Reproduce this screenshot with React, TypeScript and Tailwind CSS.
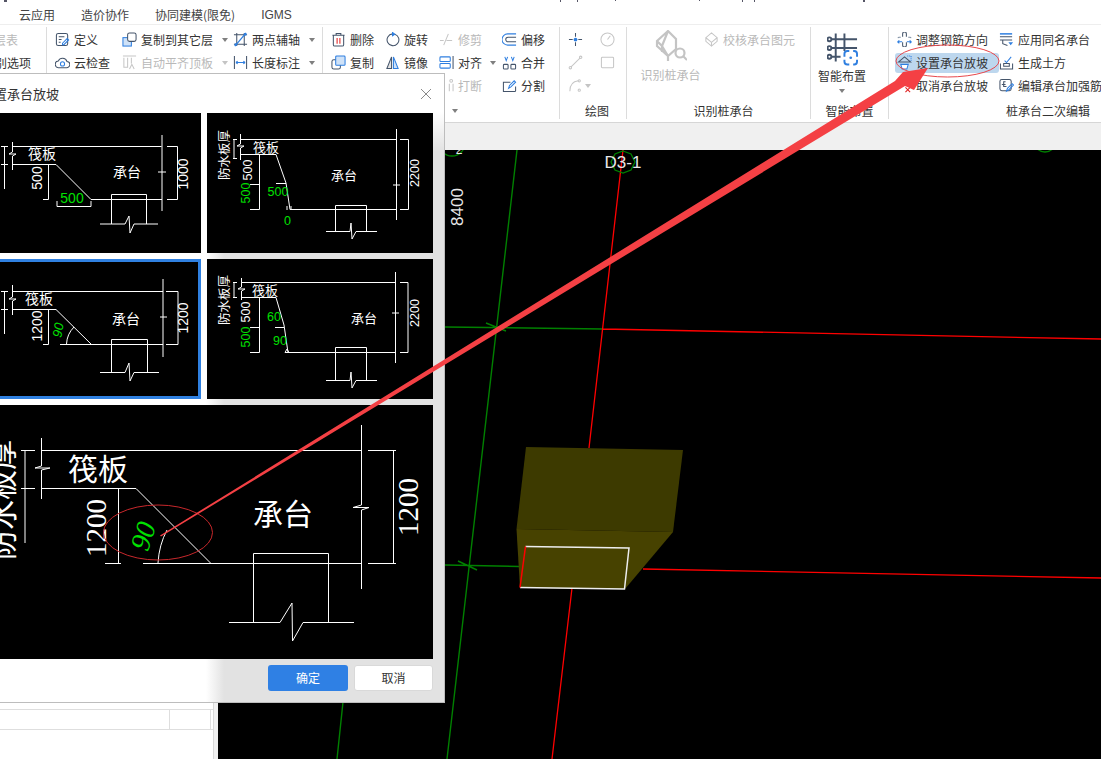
import type { ReactNode } from "react";

const DARK = "#44546a";
const BLUE = "#2f7fe0";
const GREY = "#c6c6c6";
const SANS = "Noto Sans CJK SC, sans-serif";
const SERIF = "Liberation Serif, Noto Sans CJK SC, serif";

function Ico({ children, w = 15 }: { children: ReactNode; w?: number }) {
  return (
    <svg viewBox="0 0 16 16" width={w} height={w} fill="none" strokeWidth="1.1" stroke={DARK} className="shrink-0">
      {children}
    </svg>
  );
}

function Caret({ light }: { light?: boolean }) {
  return <span className={`block h-0 w-0 border-x-[3.5px] border-t-[4px] border-x-transparent ${light ? "border-t-[#c4c4c4]" : "border-t-[#7f7f7f]"}`} />;
}

function Item({
  icon,
  label,
  off,
  caret,
  w,
  active,
}: {
  icon: ReactNode;
  label: string;
  off?: boolean;
  caret?: number;
  w: string;
  active?: boolean;
}) {
  return (
    <div className={`flex h-[23px] items-center ${w}`}>
      <div className={`flex h-[20px] items-center gap-[4px] whitespace-nowrap rounded-[3px] ${active ? "-ml-[2px] w-[105px] bg-[#bdd7ee] pl-[2px]" : ""}`}>
        {icon}
        <span className={off ? "text-[#b9b9b9]" : "text-[#333]"}>{label}</span>
        {caret !== undefined && (
          <span className="flex items-center" style={{ marginLeft: caret }}>
            <Caret light={off} />
          </span>
        )}
      </div>
    </div>
  );
}

function Group({ w, pl, label, children }: { w: string; pl: string; label?: string; children: ReactNode }) {
  return (
    <div className={`mt-[2px] flex h-[92px] shrink-0 flex-col border-r border-[#dcdcdc] ${w} ${pl}`}>
      <div className="flex min-h-0 flex-1 flex-col pt-[1px]">{children}</div>
      {label && <div className="h-[16px] text-center leading-[16px] text-[#333]">{label}</div>}
    </div>
  );
}

const I = {
  define: (
    <Ico>
      <rect x="1.5" y="1.5" width="12" height="13" rx="2" />
      <path d="M4 5h6M4 8h3M4 11h2" />
      <path d="M8 12l5-5 1.5 1.5-5 5H8z" stroke={BLUE} />
    </Ico>
  ),
  copyLayer: (
    <Ico>
      <rect x="1" y="6" width="9" height="9" fill="#cfe2f8" stroke={BLUE} />
      <rect x="6" y="1" width="9" height="9" rx="2" fill="#fff" />
    </Ico>
  ),
  axis: (
    <Ico>
      <path d="M4 1v14M12 1v14M1 13h14M1 3h14" />
      <path d="M2 15L14 1" stroke={BLUE} strokeWidth="1.4" />
      <circle cx="13" cy="2.5" r="1.4" fill={BLUE} stroke="none" />
      <circle cx="3" cy="13.5" r="1.4" fill={BLUE} stroke="none" />
    </Ico>
  ),
  cloud: (
    <Ico>
      <path d="M4 13.5a3.5 3.5 0 01-.5-7 5 5 0 019.3.4 3.3 3.3 0 01-.6 6.6z" />
      <circle cx="8" cy="9.5" r="2.2" stroke={BLUE} />
    </Ico>
  ),
  align: (
    <Ico>
      <path d="M1 1h14M2 3v10h4V3M10 3v6" stroke={GREY} />
      <path d="M8 15l2.5-5 2.5 5" stroke={GREY} />
    </Ico>
  ),
  dim: (
    <Ico>
      <path d="M1.5 1v14M14.5 1v14" />
      <path d="M3 8h10M3 8l2-1.5M3 8l2 1.5M13 8l-2-1.5M13 8l-2 1.5" stroke={BLUE} />
    </Ico>
  ),
  del: (
    <Ico>
      <path d="M1.5 3.5h13M5.5 3.5V1.5h5v2M2.5 3.5v10a1.5 1.5 0 001.5 1.5h8a1.5 1.5 0 001.5-1.5v-10" />
      <path d="M6.5 6.5v6M9.5 6.5v6" stroke="#e02020" />
    </Ico>
  ),
  rotate: (
    <Ico>
      <path d="M10.5 2.3A6.3 6.3 0 118 2" />
      <path d="M8 .5v3.5L10.5 2.3z" fill={BLUE} stroke={BLUE} />
    </Ico>
  ),
  trim: (
    <Ico>
      <path d="M1 9h4M8 9h6M10 2L5 14" stroke={GREY} />
    </Ico>
  ),
  offset: (
    <Ico>
      <path d="M15 2H6a6 6 0 000 12h9" stroke={BLUE} />
      <path d="M15 5.5H6.5a2.5 2.5 0 000 5H15" />
    </Ico>
  ),
  copy: (
    <Ico>
      <rect x="1" y="5" width="9" height="10" rx="2" />
      <rect x="5" y="1" width="10" height="10" rx="1" fill="#cfe2f8" stroke={BLUE} />
    </Ico>
  ),
  mirror: (
    <Ico>
      <path d="M7 2L2 14.5h5z" fill="#e4e4e4" />
      <path d="M9 2l5 12.5H9z" fill="#cfe2f8" stroke={BLUE} />
    </Ico>
  ),
  alignV: (
    <Ico>
      <path d="M15 1v14" />
      <rect x="1" y="2" width="11" height="5" rx="1" stroke={BLUE} />
      <rect x="1" y="9" width="11" height="5" rx="1" stroke={BLUE} />
    </Ico>
  ),
  merge: (
    <Ico>
      <rect x="1.5" y="10" width="5" height="5" rx="1" />
      <rect x="9.5" y="10" width="5" height="5" rx="1" />
      <path d="M3 2l1.5 4L6 2M10 2l1.5 4L13 2" stroke={BLUE} />
    </Ico>
  ),
  split: (
    <Ico>
      <path d="M14.5 9v4.5a1 1 0 01-1 1h-12v-10H9" />
      <path d="M7 11l1-3 5-5 1.5 1.5-5 5z" stroke={BLUE} />
    </Ico>
  ),
  breakIco: (
    <Ico>
      <path d="M11 6v8M15 6v8" stroke={GREY} />
      <circle cx="13" cy="3" r="1.5" stroke={GREY} />
    </Ico>
  ),
  rebar: (
    <Ico>
      <path d="M6 5V2a2 2 0 014 0v3M6 11v3a2 2 0 004 0v-3" />
      <path d="M4 5.5H2a1.5 1.5 0 00-1 1M12 5.5h2a1.5 1.5 0 011 1" stroke="#7f8fa3" />
      <path d="M.5 10.5h5M10.5 10.5h5M.5 10.5l2-1.5M.5 10.5l2 1.5M15.5 10.5l-2-1.5M15.5 10.5l-2 1.5" stroke={BLUE} />
    </Ico>
  ),
  sameName: (
    <Ico>
      <path d="M1 2h13" stroke={BLUE} strokeWidth="1.6" />
      <path d="M1 5h13M1 8.5h13M4 8.5v4l5 2" />
      <path d="M10 11h5l-2.5 3z" fill={BLUE} stroke="none" />
    </Ico>
  ),
  setSlope: (
    <Ico>
      <path d="M1.5 7.5L8 2l6.5 5.5z" stroke={DARK} />
      <path d="M4 10l1.5 5h5L12 10z" fill="#fff" stroke={BLUE} />
      <path d="M11 1h4v5" stroke={BLUE} strokeDasharray="1 1" />
    </Ico>
  ),
  earth: (
    <Ico>
      <path d="M1.5 9v6h13V9" />
      <path d="M5 9h6v3H5z" />
      <path d="M6 6l2 2 5-6" stroke={BLUE} />
    </Ico>
  ),
  cancelSlope: (
    <Ico>
      <path d="M1 1v7h8M1 4h5" />
      <path d="M9 10l5 5M14 10l-5 5" stroke="#e02020" />
    </Ico>
  ),
  editRebar: (
    <Ico>
      <rect x="1" y="1.5" width="12" height="12" rx="2" />
      <path d="M7 4H5v5h3M3 7h4" />
      <path d="M8 14l1-3 5-5 1.5 1.5-5 5z" stroke={BLUE} />
    </Ico>
  ),
  checkPile: (
    <Ico>
      <path d="M8 1l6 5-6 5-6-5z M2 6v4l6 5 6-5V6" stroke={GREY} />
      <path d="M8 11v4" stroke={GREY} />
    </Ico>
  ),
};

function T({
  x,
  y,
  t,
  size = 13,
  fill = "#fff",
  rot,
  font = SANS,
  italic,
}: {
  x: number;
  y: number;
  t: string;
  size?: number;
  fill?: string;
  rot?: number;
  font?: string;
  italic?: boolean;
}) {
  return (
    <text
      x={x}
      y={y}
      fontSize={size}
      fill={fill}
      fontFamily={font}
      fontStyle={italic ? "italic" : undefined}
      textAnchor="middle"
      dominantBaseline="central"
      transform={rot !== undefined ? `rotate(${rot} ${x} ${y})` : undefined}
    >
      {t}
    </text>
  );
}

const NUM = "Liberation Sans, sans-serif";
const LIME = "#00e000";

function Card({ box, selected, children }: { box: string; selected?: boolean; children: ReactNode }) {
  return (
    <div className={`h-[140px] overflow-hidden bg-black ${selected ? "border-[3px] border-[#2f80e0]" : ""}`}>
      <svg viewBox={box} className={`block h-[140px] w-[226px] ${selected ? "-m-[3px]" : ""}`}>
        {children}
      </svg>
    </div>
  );
}

function Dialog() {
  return (
    <div className="absolute left-[-100px] top-[73px] flex h-[630px] w-[545px] flex-col border border-[#bdbdbd] bg-white">
      <div className="absolute bottom-0 left-[305px] right-0 top-[38px] bg-[linear-gradient(to_bottom,#fff,transparent_40px),linear-gradient(to_right,#fff,#e2e2e2_18px)]" />
      <div className="relative flex h-[39px] shrink-0 items-center pl-[80px] pr-[12px] text-[13px] text-[#333]">
        <span>设置承台放坡</span>
        <svg viewBox="0 0 12 12" className="ml-auto h-[12px] w-[12px]" stroke="#8a8a8a" strokeWidth="1">
          <path d="M1 1l10 10M11 1L1 11" />
        </svg>
      </div>
      <div className="relative flex flex-col gap-[6px] pl-[74px] pr-[11px]">
        <div className="grid grid-cols-[226px_226px] gap-[6px]">
          <Card box="-25 113 226 140">
            <path
              stroke="#fff"
              fill="none"
              d="M13 146.5H161.5M162 135V211M158 172H166M167 146.5H177.5V199.5H167M4.5 146V189M1 146.5H8M1 164.5H8M12.5 142V152L9 154H16L12.5 156V170M13 164.5H56L91 199.5H162M48.5 164.5V199.5M43 164.5H48.5M43 199.5H48.5M111.5 224V194.5H146.5V224M100 224H125L129 216L130 233L134 224H158M57 201V206.5H91V201"
            />
            <T x={42} y={153} t="筏板" size={14} />
            <T x={127} y={171} t="承台" size={14} />
            <T x={183} y={174} t="1000" rot={-90} font={NUM} size={14} />
            <T x={37} y={178} t="500" rot={-90} font={NUM} size={14} />
            <T x={72} y={198} t="500" fill={LIME} font={NUM} size={14} />
          </Card>
          <Card box="207 113 226 140">
            <path
              stroke="#fff"
              fill="none"
              d="M240 139.5H396.5M396.5 129V220M393 185H400M400 139.5H408.5V209.5H400M234 139V158M233 139.5H237M233 158.5H237M240.5 134V144L237 146H244L240.5 148V160M240 154.5H276L286 183L290 209.5H396.5M259.5 154.5V209.5M250 154.5H259.5M250 184.5H259.5M250 209.5H259.5M276 183.5H286M335.5 231V205.5H366.5V231M326 231.5H350L351 223L352 239L356 231.5H377M287 206V210M291 206V210"
            />
            <T x={223} y={155} t="防水板厚" rot={-90} size={12.5} />
            <T x={266} y={146} t="筏板" size={13} />
            <T x={344} y={174} t="承台" size={13} />
            <T x={415} y={173} t="2200" rot={-90} font={NUM} size={12.5} />
            <T x={248} y={170} t="500" rot={-90} font={NUM} size={12.5} />
            <T x={246} y={193} t="500" rot={-90} font={NUM} size={12.5} fill={LIME} />
            <T x={278} y={192} t="500" font={NUM} size={12.5} fill={LIME} />
            <T x={287.5} y={221} t="0" font={NUM} size={12.5} fill={LIME} />
          </Card>
          <Card box="-25 259 226 140" selected>
            <path
              stroke="#fff"
              fill="none"
              d="M13 291.5H163M163 279V357M160 317H167M166 291.5H178V344.5H166M4.5 291V334M1 291.5H8M1 309.5H8M12.5 285V297L9 299H16L12.5 301V315M13 309.5H56L91 344M48.5 309.5V344.5M43 309.5H48.5M43 344.5H48.5M60 344.5H163M66.5 344Q67 334 74 327M111.5 372V339.5H147.5V372M100 372.5H125L129 363L130 381L134 372.5H159"
            />
            <T x={39} y={298} t="筏板" size={14} />
            <T x={126} y={318} t="承台" size={14} />
            <T x={183} y={318} t="1200" rot={-90} font={NUM} size={14} />
            <T x={37} y={326} t="1200" rot={-90} font={NUM} size={14} />
            <T x={58} y={330} t="90" rot={-80} font={NUM} size={13} fill={LIME} italic />
          </Card>
          <Card box="207 259 226 140">
            <path
              stroke="#fff"
              fill="none"
              d="M241 282.5H395.5M395.5 272V363M392 313H399M400 282.5H408V352.5H400M234 282V297M233 282.5H237M233 297.5H237M241.5 278V287L238 289H245L241.5 291V300M241 297.5H276L284 325L288 352.5M259.5 297.5V352.5M250 327.5H259.5M250 352.5H259.5M275 327.5H284M285 352.5H395.5M285 352.5L287 349L289 352.5M335.5 380V347.5H366.5V380M326 380.5H350L351 372L352 388L356 380.5H377"
            />
            <T x={223} y={300} t="防水板厚" rot={-90} size={12.5} />
            <T x={265} y={289} t="筏板" size={13} />
            <T x={364} y={317} t="承台" size={13} />
            <T x={415} y={313} t="2200" rot={-90} font={NUM} size={12.5} />
            <T x={246} y={312} t="500" rot={-90} font={NUM} size={12.5} />
            <T x={246} y={337} t="500" rot={-90} font={NUM} size={12.5} fill={LIME} />
            <T x={274} y={317} t="60" font={NUM} size={12.5} fill={LIME} />
            <T x={280} y={341} t="90" font={NUM} size={12.5} fill={LIME} />
          </Card>
        </div>
        <div className="h-[254px] bg-black">
          <svg viewBox="-25 405 458 254" className="block h-[254px] w-[458px]">
            <path
              stroke="#fff"
              fill="none"
              d="M41 450.5H361M361.5 425V505L353 507.5H369L361.5 510V589M368 450.5H396M393.5 450.5V563.5M368 563.5H396M25 450V543M21 450.5H35M21 488.5H35M41.5 438V466L35 468H50L41.5 470V499M41 488.5H136L211 563.5M118.5 488.5V563.5M118 488.5H125M105 563.5H121M143 563.5H361M158 563Q159 545 167 530M253.5 622V553.5H328.5V622M229 622.5H280L292 603L292.5 641L303 622.5H354"
            />
            <T x={98} y={467} t="筏板" size={30} />
            <T x={283} y={512} t="承台" size={30} />
            <T x={408} y={507} t="1200" rot={-90} font={SERIF} size={29} />
            <T x={96} y={528} t="1200" rot={-90} font={SERIF} size={29} />
            <T x={143} y={536} t="90" rot={-72} font={SERIF} size={28} fill={LIME} italic />
            <T x={0} y={500} t="防水板厚" rot={-90} size={30} />
          </svg>
        </div>
      </div>
      <div className="relative mt-[6px] flex h-[26px] justify-end gap-[6px] pr-[11px] text-[12px]">
        <button className="h-[26px] w-[80px] rounded-[3px] bg-[#2f80e4] text-white">确定</button>
        <button className="h-[26px] w-[79px] rounded-[3px] border border-[#d9d9d9] bg-white text-[#333]">取消</button>
      </div>
    </div>
  );
}

export default function App() {
  return (
    <div className="relative h-[759px] w-[1101px] overflow-hidden bg-white font-['Noto_Sans_CJK_SC',sans-serif] text-[12px]">
      {/* title bar leftovers */}
      <svg className="block h-[3px] w-[1101px]" viewBox="0 0 1101 3">
        <path d="M4 0h3v2H4zM560 0h1v2h-1zM577 0h1v2h-1zM615 0h1v1h-1zM699 0h1v1h-1zM742 0h1v2h-1zM754 0h1v2h-1zM863 0h2v2h-2z" fill="#556" />
      </svg>
      <div className="flex h-[22px] items-center border-b border-[#eeeeee] pt-[3px] text-[#444]">
        <span className="ml-[19px]">云应用</span>
        <span className="ml-[26px]">造价协作</span>
        <span className="ml-[26px]">协同建模(限免)</span>
        <span className="ml-[26px] font-['Liberation_Sans',sans-serif]">IGMS</span>
      </div>
      <div className="flex h-[98px] border-b border-[#d6d6d6] bg-white">
        <Group w="w-[47px]" pl="pl-0">
          <div className="flex h-[23px] items-center justify-end whitespace-nowrap pr-[28px] text-[#b9b9b9]">层表</div>
          <div className="flex h-[23px] items-center justify-end whitespace-nowrap pr-[15px] text-[#333]">别选项</div>
        </Group>
        <Group w="w-[276px]" pl="pl-[8px]">
          <div className="flex">
            <Item w="w-[67px]" icon={I.define} label="定义" />
            <Item w="w-[111px]" icon={I.copyLayer} label="复制到其它层" caret={5} />
            <Item w="w-[88px]" icon={I.axis} label="两点辅轴" caret={5} />
          </div>
          <div className="flex">
            <Item w="w-[67px]" icon={I.cloud} label="云检查" />
            <Item w="w-[111px]" icon={I.align} label="自动平齐顶板" off caret={5} />
            <Item w="w-[88px]" icon={I.dim} label="长度标注" caret={5} />
          </div>
        </Group>
        <Group w="w-[237px]" pl="pl-[8px]">
          <div className="flex">
            <Item w="w-[54px]" icon={I.del} label="删除" />
            <Item w="w-[54px]" icon={I.rotate} label="旋转" />
            <Item w="w-[63px]" icon={I.trim} label="修剪" off />
            <Item w="w-[50px]" icon={I.offset} label="偏移" />
          </div>
          <div className="flex">
            <Item w="w-[54px]" icon={I.copy} label="复制" />
            <Item w="w-[54px]" icon={I.mirror} label="镜像" />
            <Item w="w-[63px]" icon={I.alignV} label="对齐" caret={4} />
            <Item w="w-[50px]" icon={I.merge} label="合并" />
          </div>
          <div className="flex pl-[108px]">
            <Item w="w-[63px]" icon={I.breakIco} label="打断" off />
            <Item w="w-[50px]" icon={I.split} label="分割" />
          </div>
          <div className="flex h-[18px] pl-[121px] pt-[12px]">
            <Caret />
          </div>
        </Group>
        <Group w="w-[67px]" pl="pl-[8px]" label="绘图">
          <div className="flex h-[23px] items-center gap-[17px]">
            <Ico>
              <path d="M8 1v4M8 11v4M1 8h4M11 8h4" />
              <circle cx="8" cy="8" r="2" fill={BLUE} stroke="none" />
            </Ico>
            <Ico>
              <circle cx="8" cy="8" r="7" stroke={GREY} />
              <path d="M8 8l3-4" stroke={GREY} />
            </Ico>
          </div>
          <div className="flex h-[23px] items-center gap-[17px]">
            <Ico>
              <path d="M3 13L13 3" stroke={GREY} />
              <circle cx="2.5" cy="13.5" r="1.3" stroke={GREY} />
              <circle cx="13.5" cy="2.5" r="1.3" stroke={GREY} />
            </Ico>
            <Ico>
              <rect x="1.5" y="2.5" width="13" height="11" rx="1" stroke={GREY} />
            </Ico>
          </div>
          <div className="flex h-[23px] items-center gap-[2px]">
            <Ico>
              <path d="M2 14Q2 4 11 3" stroke={GREY} />
              <circle cx="12" cy="3" r="1.2" stroke={GREY} />
              <circle cx="12" cy="13" r="1.2" stroke={GREY} />
            </Ico>
            <Caret light />
          </div>
        </Group>
        <Group w="w-[184px]" pl="pl-[10px]" label="识别桩承台">
          <div className="flex">
            <div className="flex w-[67px] flex-col items-center pt-[2px] text-[#b9b9b9]">
              <svg viewBox="0 0 32 32" width="32" height="32" fill="none" stroke="#c4c4c4" strokeWidth="2.2">
                <path d="M13 1L2 11v5l11 10 8-7V9zM2 11l5 5v6M13 1L7 16M7 16l6 10M13 26v5" />
                <circle cx="25" cy="23" r="4.5" />
                <path d="M28 26l4 4" />
              </svg>
              <span className="mt-[4px] whitespace-nowrap">识别桩承台</span>
            </div>
            <Item w="w-[92px]" icon={I.checkPile} label="校核承台图元" off />
          </div>
        </Group>
        <Group w="w-[78px]" pl="pl-0" label="智能布置">
          <div className="flex w-[62px] flex-col items-center pt-[5px]">
            <svg viewBox="0 0 32 33" width="31" height="33" fill="none" stroke={DARK} strokeWidth="2">
              <path d="M9 0v29M18 0v18M0 6h31M0 15h31M0 24h14" />
              <circle cx="2.5" cy="6" r="2" fill="#fff" />
              <circle cx="2.5" cy="15" r="2" fill="#fff" />
              <circle cx="2.5" cy="24" r="2" fill="#fff" />
              <path d="M18 24v-3a3 3 0 013-3h2M27 18h1a3 3 0 013 3v3M31 27v2a3 3 0 01-3 3h-1M23 32h-2a3 3 0 01-3-3v-2" stroke={BLUE} />
              <circle cx="24.5" cy="25" r="1.4" fill={BLUE} stroke="none" />
            </svg>
            <span className="mt-[1px] h-[18px] whitespace-nowrap text-[#333]">智能布置</span>
            <span className="mt-[4px] block h-[4px]">
              <Caret />
            </span>
          </div>
        </Group>
        <div className="mt-[2px] flex h-[92px] flex-col pl-[8px]">
          <div className="flex flex-1 flex-col pt-[1px]">
            <div className="flex">
              <Item w="w-[102px]" icon={I.rebar} label="调整钢筋方向" />
              <Item w="w-[100px]" icon={I.sameName} label="应用同名承台" />
            </div>
            <div className="flex">
              <Item w="w-[102px]" icon={I.setSlope} label="设置承台放坡" active />
              <Item w="w-[100px]" icon={I.earth} label="生成土方" />
            </div>
            <div className="flex">
              <Item w="w-[102px]" icon={I.cancelSlope} label="取消承台放坡" />
              <Item w="w-[100px]" icon={I.editRebar} label="编辑承台加强筋" />
            </div>
          </div>
          <div className="h-[16px] whitespace-nowrap pl-[109px] leading-[16px] text-[#333]">桩承台二次编辑</div>
        </div>
      </div>
      <div className="h-[27px] bg-[#f0f0f0]" />
      <div className="flex h-[609px] bg-[#f0f0f0]">
        <div className="flex w-[214px] shrink-0 flex-col justify-end border-r border-[#d8d8d8] bg-white pb-[29px]">
          <div className="grid h-[21px] grid-cols-[170px_41px] border-y border-[#dedede]">
            <div className="border-r border-[#dedede]" />
            <div className="border-r border-[#dedede]" />
          </div>
        </div>
        <div className="ml-[4px] flex-1 bg-black">
          <svg viewBox="218 150 883 609" className="block h-[609px] w-[883px]">
            <path d="M343 702L337 759M517 150L447 759M445 327L603 329M445 565L519 566.5M486 323L506 331M458 561L477 570" stroke="#008000" strokeWidth="1.4" fill="none" />
            <path d="M623 150L589 448M572 588L552 759M603 329L1101 339M643 569L1101 578" stroke="#ff0000" strokeWidth="1.3" fill="none" />
            <polygon points="526,447 683,450 673,532 516.5,529" fill="#3d3a00" />
            <polygon points="516.5,529 673,532 625,589 520,588" fill="#474200" />
            <path d="M525.5 546.5L629 548L624.5 589L520 587.5" stroke="#eee" strokeWidth="1.5" fill="none" />
            <path d="M525.5 546.5L520 587.5" stroke="#ff0000" strokeWidth="1.5" />
            <polygon points="623,151 631,154 635,162 631,170 623,173 615,170 611,162 615,154" stroke="#008000" strokeWidth="1.3" fill="none" />
            <circle cx="452" cy="143" r="13" stroke="#008000" strokeWidth="1.3" fill="none" />
            <circle cx="1045" cy="141" r="11" stroke="#008000" strokeWidth="1.3" fill="none" />
            <T x={623} y={162} t="D3-1" size={17} font={NUM} fill="#e8e8e8" />
            <T x={457} y={207} t="8400" size={17} font={NUM} fill="#e8e8e8" rot={-90} />
            <T x={459} y={150} t="2" size={12} font={NUM} fill="#e8e8e8" />
          </svg>
        </div>
      </div>
      <Dialog />
      {/* hand drawn markup on top of the screenshot */}
      <svg className="pointer-events-none absolute left-0 top-0 h-[759px] w-[1101px]" viewBox="0 0 1101 759">
        <ellipse cx="158" cy="532.5" rx="54.5" ry="27.5" fill="none" stroke="#c8282c" />
        <ellipse cx="947.5" cy="61" rx="51.5" ry="16" fill="none" stroke="#e8484c" />
        <polygon points="160,535.5 895,81 903,72 928,68 914,90 905,86 161,536.5" fill="#f44044" />
      </svg>
    </div>
  );
}
